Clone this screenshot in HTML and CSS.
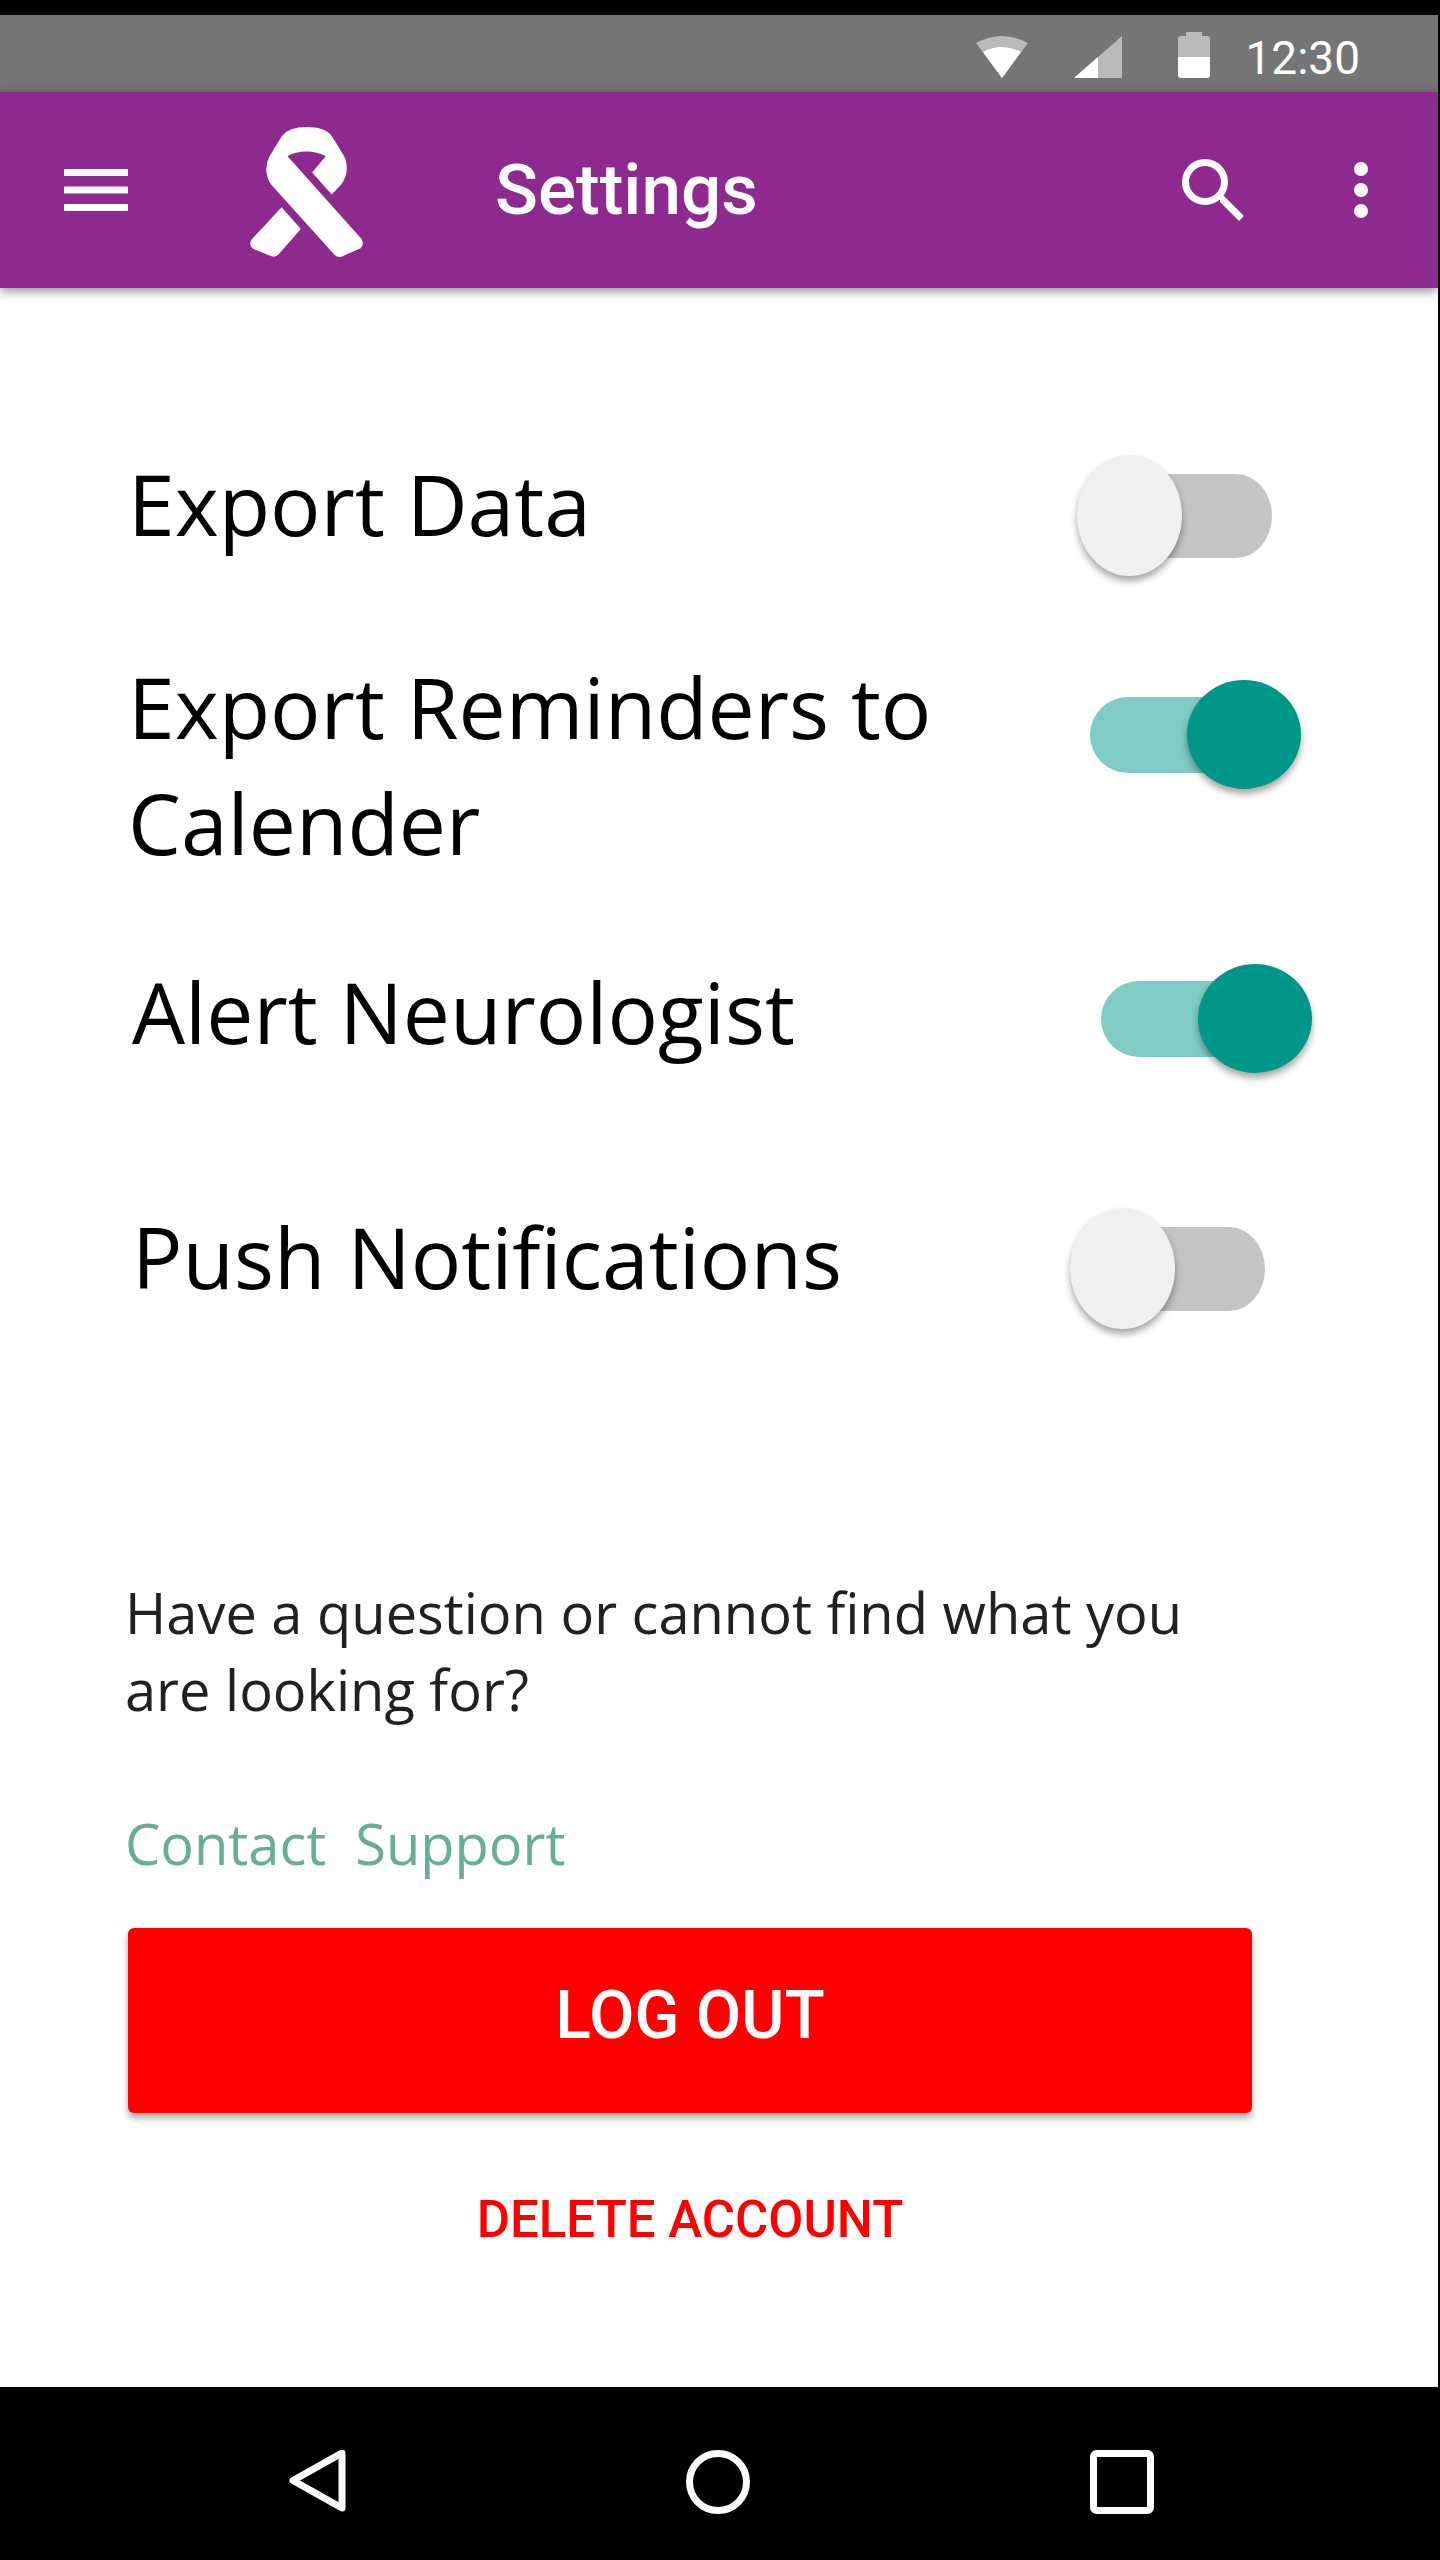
FILE: index.html
```html
<!DOCTYPE html>
<html lang="en">
<head>
  <meta charset="UTF-8">
  <title>Settings</title>
  <meta name="viewport" content="width=device-width, initial-scale=1.0">
  <link rel="stylesheet" href="styles.css">
</head>
<body>

  <div class="status-bar">
    <svg viewBox="0 0 90 46" aria-hidden="true">
      <path d="M19 11 Q45 -3 71 11 L45 46 Z" fill="#bababa"/>
      <path d="M26 20 Q45 10 64 20 L45 46 Z" fill="#fff"/>
    </svg>
    <svg viewBox="0 0 90 46" aria-hidden="true">
      <path d="M69 4 V46 H21 Z" fill="#bababa"/>
      <path d="M45 25 V46 H21 Z" fill="#fff"/>
    </svg>
    <svg viewBox="0 0 90 46" aria-hidden="true">
      <path d="M37 0 H53 V4 H58 Q61 4 61 7 V25 H29 V7 Q29 4 32 4 H37 Z" fill="#bababa"/>
      <path d="M29 25 H61 V43 Q61 46 58 46 H32 Q29 46 29 43 Z" fill="#fff"/>
    </svg>
    <span class="clock">12:30</span>
  </div>

  <header class="app-bar">
    <button type="button" class="icon-btn" aria-label="Menu">
      <svg width="64" height="44" viewBox="0 0 64 44" fill="#fff">
        <path d="M0 1h64v7H0zM0 18.5h64v7H0zM0 36h64v7H0z"/>
      </svg>
    </button>
    <svg class="ribbon" width="113" height="130" viewBox="750 380 338 391" fill="#fff" aria-hidden="true">
      <path d="M862 468 L1084 716 Q1094 732 1082 745 L1024 770 Q1012 773 1003 764 L812 552 Q798 532 798 505 Q799 485 808 468 L845 407 Q866 380 919 380 Q975 380 995 407 L1031 466 Q1041 484 1040 508 Q1038 534 1024 552 L995 583 L936 517 L977 468 Q950 454 919 454 Q885 454 862 468 Z"/>
      <path d="M844 621 L902 687 L836 762 Q826 773 814 769 L760 747 Q750 742 750 730 Q750 722 756 716 Z"/>
    </svg>
    <h1>Settings</h1>
    <button type="button" class="icon-btn" aria-label="Search">
      <svg width="62" height="62" viewBox="0 0 62 62" fill="none" stroke="#fff" stroke-width="7">
        <circle cx="23" cy="23" r="19.5"/>
        <path d="M38 37 L42 37 L62 57 L57 62 L38 43 Z" fill="#fff" stroke="none"/>
      </svg>
    </button>
    <button type="button" class="icon-btn" aria-label="More options">
      <svg width="14" height="58" viewBox="0 0 14 58" fill="#fff">
        <circle cx="7" cy="8" r="7"/>
        <circle cx="7" cy="29" r="7"/>
        <circle cx="7" cy="50" r="7"/>
      </svg>
    </button>
  </header>

  <main>
    <form class="settings">
      <div class="setting export-data">
        <label for="exportData">Export Data</label>
        <input type="checkbox" id="exportData">
      </div>
      <div class="setting reminders">
        <label for="exportReminders">Export Reminders to Calender</label>
        <input type="checkbox" id="exportReminders" checked>
      </div>
      <div class="setting alert">
        <label for="alertNeurologist">Alert Neurologist</label>
        <input type="checkbox" id="alertNeurologist" checked>
      </div>
      <div class="setting push">
        <label for="push">Push Notifications</label>
        <input type="checkbox" id="push">
      </div>
    </form>

    <section class="help">
      <p>Have a question or cannot find what you are looking for?</p>
      <a href="#support">Contact&nbsp; Support</a>
    </section>

    <div class="actions">
      <button type="button" class="logout">LOG OUT</button>
      <button type="button" class="delete">DELETE ACCOUNT</button>
    </div>
  </main>

  <nav class="nav-bar">
    <button type="button" class="icon-btn" aria-label="Back">
      <svg width="57" height="64" viewBox="0 0 57 64" fill="none" stroke="#fff" stroke-width="7" stroke-linejoin="round">
        <path d="M53 3 V58 L4 30.5 Z"/>
      </svg>
    </button>
    <button type="button" class="icon-btn" aria-label="Home">
      <svg width="64" height="64" viewBox="0 0 64 64" fill="none" stroke="#fff" stroke-width="7">
        <circle cx="32" cy="32" r="28.5"/>
      </svg>
    </button>
    <button type="button" class="icon-btn" aria-label="Recent apps">
      <svg width="64" height="64" viewBox="0 0 64 64" fill="none" stroke="#fff" stroke-width="7">
        <rect x="3.5" y="3.5" width="57" height="57" rx="3"/>
      </svg>
    </button>
  </nav>

</body>
</html>
```

FILE: styles.css
```css
* {
  box-sizing: border-box;
}

body {
  margin: 0;
  min-height: 100vh;
  display: flex;
  flex-direction: column;
  font-family: "Open Sans", sans-serif;
  background: #fff;
  color: #000;
  border-top: 15px solid #000;
  border-right: 2px solid #000;
}

button {
  border: none;
  font-family: Roboto, sans-serif;
  font-weight: 500;
  cursor: pointer;
}

svg {
  display: block;
}

.icon-btn {
  padding: 0;
  background: none;
}

/* top bars */

.status-bar {
  height: 77px;
  display: flex;
  align-items: center;
  justify-content: flex-end;
  gap: 6px;
  padding: 2px 78px 0 0;
  background: #757575;
}

.status-bar svg {
  width: 90px;
  height: 46px;
}

.clock {
  font: 46px/56px Roboto, sans-serif;
  color: #fff;
  padding-top: 6px;
}

.app-bar {
  height: 196px;
  display: flex;
  align-items: center;
  padding: 0 70px 0 64px;
  background: #8e2990;
  box-shadow: 0 3px 10px rgba(0,0,0,0.45);
}

.ribbon {
  margin: 4px 132px 0 122px;
}

.app-bar h1 {
  flex: 1;
  margin: 0;
  font: 500 71px/82px Roboto, sans-serif;
  color: #fff;
}

.app-bar h1 + .icon-btn {
  margin-right: 110px;
}

/* settings list */

main {
  flex: 1;
}

.settings {
  display: flex;
  flex-direction: column;
  gap: 73px;
  padding: 158px 126px 0 128px;
}

.setting {
  display: flex;
  align-items: flex-start;
}

.setting label {
  flex: 1;
  font-size: 84px;
  line-height: 116px;
}

.export-data {
  padding-right: 40px;
}

.reminders {
  padding-right: 11px;
}

.alert {
  padding-left: 4px;
  margin-bottom: 53px;
}

.push {
  padding: 0 47px 0 4px;
}

/* switch: track and thumb share one grid cell */

.setting input {
  appearance: none;
  display: grid;
  align-items: center;
  width: 195px;
  height: 121px;
  margin: 9px 0 0;
  cursor: pointer;
}

.setting input::before,
.setting input::after {
  content: "";
  grid-area: 1 / 1;
}

.setting input::before {
  height: 84px;
  margin-left: 8px;
  border-radius: 36px / 42px;
  background: #c4c4c4;
}

.setting input::after {
  width: 105px;
  height: 121px;
  border-radius: 50%;
  background: #f0f0f0;
  box-shadow: 0 5px 7px rgba(0,0,0,0.35);
}

.setting input:checked {
  width: 211px;
  height: 109px;
  margin-top: 10px;
}

.setting input:checked::before {
  height: 76px;
  margin: 0 8px 0 0;
  border-radius: 38px;
  background: #80cbc4;
}

.setting input:checked::after {
  justify-self: end;
  width: 114px;
  height: 109px;
  background: #009688;
}

.reminders input:checked {
  margin-top: 31px;
}

/* help */

.help {
  padding: 245px 186px 0 125px;
  font-size: 56px;
  line-height: 77px;
}

.help p {
  margin: 0 0 77px;
  color: #212121;
}

.help a {
  color: #67ad97;
  text-decoration: none;
}

/* actions */

.actions {
  display: flex;
  flex-direction: column;
  align-items: center;
  padding: 46px 186px 0 128px;
}

.logout {
  width: 100%;
  height: 185px;
  padding: 0 0 11px;
  border-radius: 6px;
  background: #f00;
  color: #fff;
  font-size: 66px;
  box-shadow: 0 5px 7px rgba(0,0,0,0.35);
}

.delete {
  margin-top: 77px;
  padding: 0;
  background: none;
  color: #f00;
  font-size: 51px;
  line-height: 60px;
}

/* bottom bar */

.nav-bar {
  height: 173px;
  display: flex;
  align-items: center;
  justify-content: space-between;
  padding: 16px 284px 0 289px;
  background: #000;
}
```
